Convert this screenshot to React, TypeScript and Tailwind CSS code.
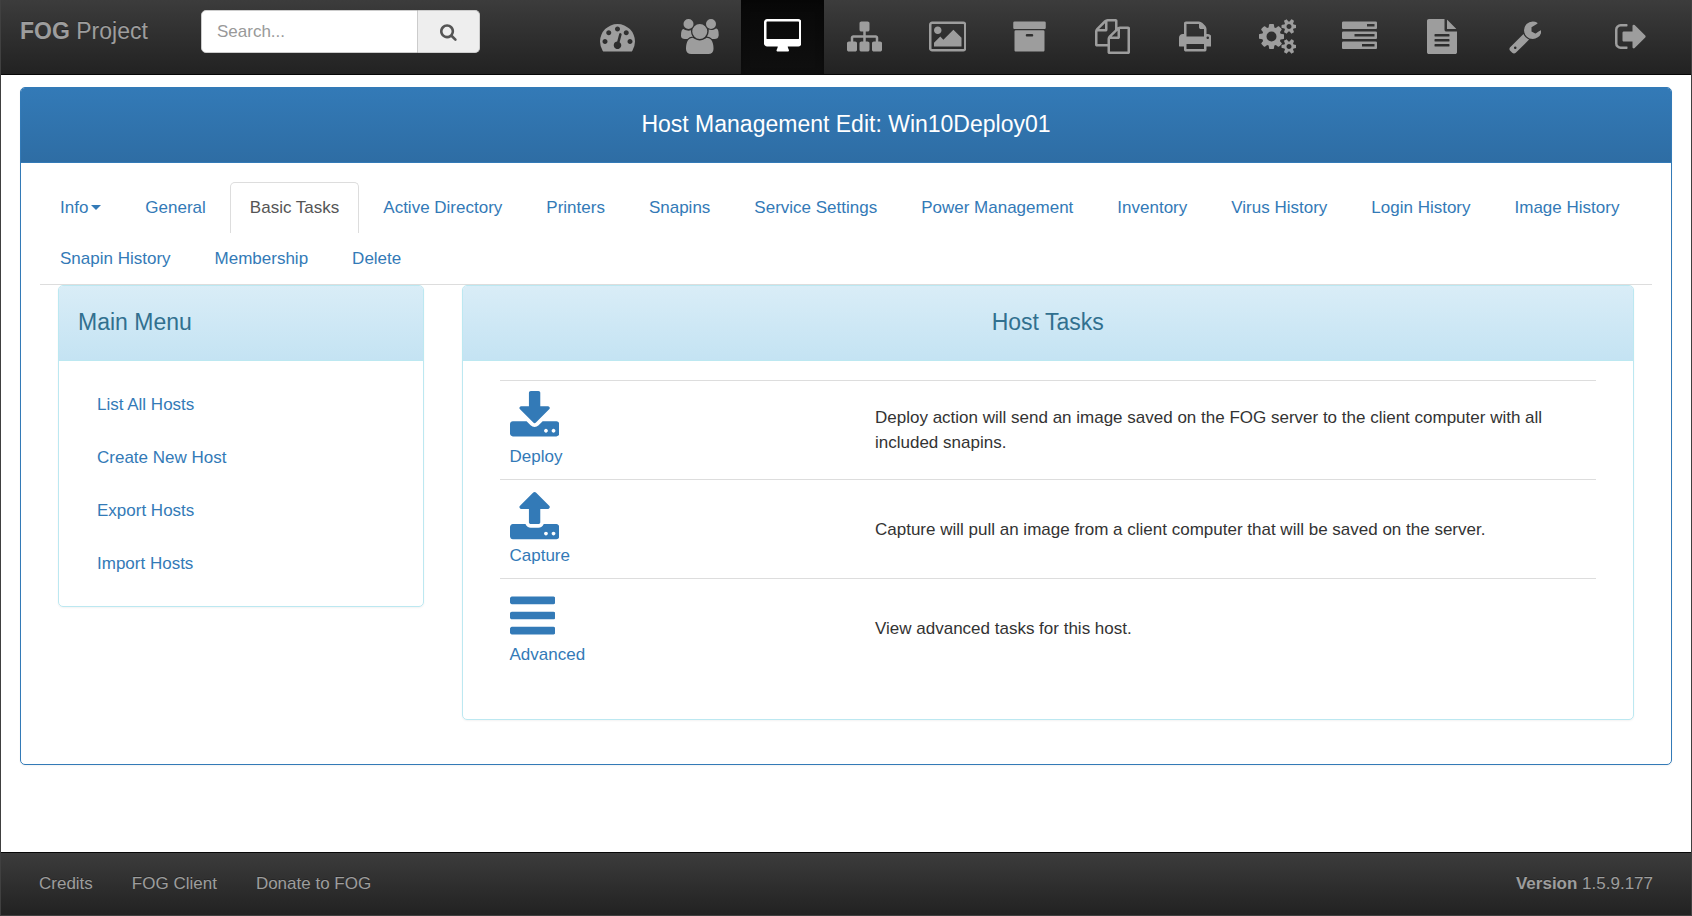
type Glyph = { width: number; path: string };

const bar = (y: number, w: number, h: number) =>
  `M${w} ${y + h - 64}v-${h - 128}q0 -26 -19 -45t-45 -19h-${w - 128}q-26 0 -45 19t-19 45v${h - 128}q0 26 19 45t45 19h${w - 128}q26 0 45 -19t19 -45z`;

const dot = (x: number, y: number) =>
  `M${x} ${y}q0 26 -19 45t-45 19t-45 -19t-19 -45t19 -45t45 -19t45 19t19 45z`;

const gauge = (x: number, y: number) =>
  `M${x} ${y}q0 53 -37.5 90.5t-90.5 37.5t-90.5 -37.5t-37.5 -90.5t37.5 -90.5t90.5 -37.5t90.5 37.5t37.5 90.5z`;

const smallCog = (y: number) =>
  `M1920 ${y}v-140q0 -16 -149 -31q-12 -27 -30 -52q51 -113 51 -138q0 -4 -4 -7q-122 -71 -124 -71q-8 0 -46 47t-52 68q-20 -2 -30 -2t-30 2q-14 -21 -52 -68t-46 -47q-2 0 -124 71q-4 3 -4 7q0 25 51 138q-18 25 -30 52q-149 15 -149 31v140q0 16 149 31q13 29 30 52q-51 113 -51 138q0 4 4 7q4 2 35 20t59 34t30 16q8 0 46 -46.5t52 -67.5q20 2 30 2t30 -2q51 71 92 112l6 2q4 0 124 -70q4 -3 4 -7q0 -25 -51 -138q17 -23 30 -52q149 -15 149 -31z`;

const textLine = (y: number) =>
  `M1152 ${y}v64q0 14 -9 23t-23 9h-704q-14 0 -23 -9t-9 -23v-64q0 -14 9 -23t23 -9h704q14 0 23 9t9 23z`;

// Paths use font coordinates: y grows upwards, baseline at 0, ascent 1536, descent -256.
const glyphs = {
  dashboard: {
    width: 1792,
    path:
      gauge(384, 384) +
      gauge(576, 832) +
      "M1004 351l101 382q6 26 -7.5 48.5t-38.5 29.5t-48 -6.5t-30 -39.5l-101 -382q-60 -5 -107 -43.5t-63 -98.5q-20 -77 20 -146t117 -89t146 20t89 117q16 60 -6 117t-72 91z" +
      gauge(1664, 384) +
      gauge(1024, 1024) +
      gauge(1472, 832) +
      "M1792 384q0 -261 -141 -483q-19 -29 -54 -29h-1402q-35 0 -54 29q-141 221 -141 483q0 182 71 348t191 286t286 191t348 71t348 -71t286 -191t191 -286t71 -348z",
  },
  users: {
    width: 1920,
    path: "M593 640q-162 -5 -265 -128h-134q-82 0 -138 40.5t-56 118.5q0 353 124 353q6 0 43.5 -21t97.5 -42.5t119 -21.5q67 0 133 23q-5 -37 -5 -66q0 -159 93 -287zM1664 3q0 -120 -73 -189.5t-194 -69.5h-874q-121 0 -194 69.5t-73 189.5q0 53 3.5 103.5t14 109t26.5 108.5t43 97.5t62 81t85.5 53.5t111.5 20q10 0 43 -21.5t73 -48t107 -48t135 -21.5t135 21.5t107 48t73 48t43 21.5q61 0 111.5 -20t85.5 -53.5t62 -81t43 -97.5t26.5 -108.5t14 -109t3.5 -103.5zM640 1280q0 -106 -75 -181t-181 -75t-181 75t-75 181t75 181t181 75t181 -75t75 -181zM1344 896q0 -159 -112.5 -271.5t-271.5 -112.5t-271.5 112.5t-112.5 271.5t112.5 271.5t271.5 112.5t271.5 -112.5t112.5 -271.5zM1920 671q0 -78 -56 -118.5t-138 -40.5h-134q-103 123 -265 128q93 128 93 287q0 29 -5 66q66 -23 133 -23q59 0 119 21.5t97.5 42.5t43.5 21q124 0 124 -353zM1792 1280q0 -106 -75 -181t-181 -75t-181 75t-75 181t75 181t181 75t181 -75t75 -181z",
  },
  desktop: {
    width: 1920,
    path: "M1792 544v832q0 13 -9.5 22.5t-22.5 9.5h-1600q-13 0 -22.5 -9.5t-9.5 -22.5v-832q0 -13 9.5 -22.5t22.5 -9.5h1600q13 0 22.5 9.5t9.5 22.5zM1920 1376v-1088q0 -66 -47 -113t-113 -47h-544q0 -37 16 -77.5t32 -71t16 -43.5q0 -26 -19 -45t-45 -19h-512q-26 0 -45 19t-19 45q0 14 16 44t32 70t16 78h-544q-66 0 -113 47t-47 113v1088q0 66 47 113t113 47h1600q66 0 113 -47t47 -113z",
  },
  sitemap: {
    width: 1792,
    path: "M1792 288v-320q0 -40 -28 -68t-68 -28h-320q-40 0 -68 28t-28 68v320q0 40 28 68t68 28h96v192h-512v-192h96q40 0 68 -28t28 -68v-320q0 -40 -28 -68t-68 -28h-320q-40 0 -68 28t-28 68v320q0 40 28 68t68 28h96v192h-512v-192h96q40 0 68 -28t28 -68v-320q0 -40 -28 -68t-68 -28h-320q-40 0 -68 28t-28 68v320q0 40 28 68t68 28h96v192q0 52 38 90t90 38h512v192h-96q-40 0 -68 28t-28 68v320q0 40 28 68t68 28h320q40 0 68 -28t28 -68v-320q0 -40 -28 -68t-68 -28h-96v-192h512q52 0 90 -38t38 -90v-192h96q40 0 68 -28t28 -68z",
  },
  picture: {
    width: 1920,
    path: "M640 960q0 -80 -56 -136t-136 -56t-136 56t-56 136t56 136t136 56t136 -56t56 -136zM1664 576v-448h-1408v192l320 320l160 -160l512 512zM1760 1280h-1600q-13 0 -22.5 -9.5t-9.5 -22.5v-1216q0 -13 9.5 -22.5t22.5 -9.5h1600q13 0 22.5 9.5t9.5 22.5v1216q0 13 -9.5 22.5t-22.5 9.5zM1920 1248v-1216q0 -66 -47 -113t-113 -47h-1600q-66 0 -113 47t-47 113v1216q0 66 47 113t113 47h1600q66 0 113 -47t47 -113z",
  },
  archive: {
    width: 1792,
    path: "M1088 704q0 26 -19 45t-45 19h-256q-26 0 -45 -19t-19 -45t19 -45t45 -19h256q26 0 45 19t19 45zM1664 896v-960q0 -26 -19 -45t-45 -19h-1408q-26 0 -45 19t-19 45v960q0 26 19 45t45 19h1408q26 0 45 -19t19 -45zM1728 1344v-256q0 -26 -19 -45t-45 -19h-1536q-26 0 -45 19t-19 45v256q0 26 19 45t45 19h1536q26 0 45 -19t19 -45z",
  },
  files: {
    width: 1792,
    path: "M1696 1152q40 0 68 -28t28 -68v-1216q0 -40 -28 -68t-68 -28h-960q-40 0 -68 28t-28 68v288h-544q-40 0 -68 28t-28 68v672q0 40 20 88t48 76l408 408q28 28 76 48t88 20h416q40 0 68 -28t28 -68v-328q68 40 128 40h416zM1152 939l-299 -299h299v299zM512 1323l-299 -299h299v299zM708 676l316 316v416h-384v-416q0 -40 -28 -68t-68 -28h-416v-640h512v256q0 40 20 88t48 76zM1664 -128v1152h-384v-416q0 -40 -28 -68t-68 -28h-416v-640h896z",
  },
  print: {
    width: 1664,
    path: "M384 0h896v256h-896v-256zM384 640h896v384h-160q-40 0 -68 28t-28 68v160h-640v-640zM1536 576q0 26 -19 45t-45 19t-45 -19t-19 -45t19 -45t45 -19t45 19t19 45zM1664 576v-416q0 -13 -9.5 -22.5t-22.5 -9.5h-224v-160q0 -40 -28 -68t-68 -28h-960q-40 0 -68 28t-28 68v160h-224q-13 0 -22.5 9.5t-9.5 22.5v416q0 79 56.5 135.5t135.5 56.5h64v544q0 40 28 68t68 28h672q40 0 88 -20t76 -48l152 -152q28 -28 48 -76t20 -88v-256h64q79 0 135.5 -56.5t56.5 -135.5z",
  },
  cogs: {
    width: 1920,
    path:
      "M896 640q0 106 -75 181t-181 75t-181 -75t-75 -181t75 -181t181 -75t181 75t75 181zM1664 128q0 52 -38 90t-90 38t-90 -38t-38 -90q0 -53 37.5 -90.5t90.5 -37.5t90.5 37.5t37.5 90.5zM1664 1152q0 52 -38 90t-90 38t-90 -38t-38 -90q0 -53 37.5 -90.5t90.5 -37.5t90.5 37.5t37.5 90.5zM1280 731v-185q0 -10 -7 -19.5t-16 -10.5l-155 -24q-11 -35 -32 -76q34 -48 90 -115q7 -11 7 -20q0 -12 -7 -19q-23 -30 -82.5 -89.5t-78.5 -59.5q-11 0 -21 7l-115 90q-37 -19 -77 -31q-11 -108 -23 -155q-7 -24 -30 -24h-186q-11 0 -20 7.5t-10 17.5l-23 153q-34 10 -75 31l-118 -89q-7 -7 -20 -7q-11 0 -21 8q-144 133 -144 160q0 9 7 19q10 14 41 53t47 61q-23 44 -35 82l-152 24q-10 1 -17 9.5t-7 19.5v185q0 10 7 19.5t16 10.5l155 24q11 35 32 76q-34 48 -90 115q-7 11 -7 20q0 12 7 20q22 30 82 89t79 59q11 0 21 -7l115 -90q34 18 77 32q11 108 23 154q7 24 30 24h186q11 0 20 -7.5t10 -17.5l23 -153q34 -10 75 -31l118 89q8 7 20 7q11 0 21 -8q144 -133 144 -160q0 -8 -7 -19q-12 -16 -42 -54t-45 -60q23 -48 34 -82l152 -23q10 -2 17 -10.5t7 -19.5z" +
      smallCog(198) +
      smallCog(1222),
  },
  tasks: {
    width: 1792,
    path:
      "M1024 128h640v128h-640v-128zM640 640h1024v128h-1024v-128zM1280 1152h384v128h-384v-128z" +
      bar(0, 1792, 384) +
      bar(512, 1792, 384) +
      bar(1024, 1792, 384),
  },
  report: {
    width: 1536,
    path:
      "M1468 1060q14 -14 28 -36h-472v472q22 -14 36 -28zM992 896h544v-1056q0 -40 -28 -68t-68 -28h-1344q-40 0 -68 28t-28 68v1600q0 40 28 68t68 28h800v-544q0 -40 28 -68t68 -28z" +
      textLine(160) +
      textLine(416) +
      textLine(672),
  },
  wrench: {
    width: 1664,
    path: "M384 64q0 26 -19 45t-45 19t-45 -19t-19 -45t19 -45t45 -19t45 19t19 45zM1028 484l-682 -682q-37 -37 -90 -37q-52 0 -91 37l-106 108q-38 36 -38 90q0 53 38 91l681 681q39 -98 114.5 -173.5t173.5 -114.5zM1662 919q0 -39 -23 -106q-47 -134 -164.5 -217.5t-258.5 -83.5q-185 0 -316.5 131.5t-131.5 316.5t131.5 316.5t316.5 131.5q58 0 121.5 -16.5t107.5 -46.5q16 -11 16 -28t-16 -28l-293 -169v-224l193 -107q5 3 79 48.5t135.5 81t70.5 35.5q15 0 23.5 -10t8.5 -25z",
  },
  signOut: {
    width: 1664,
    path: "M640 96q0 -4 1 -20t0.5 -26.5t-3 -23.5t-10 -19.5t-20.5 -6.5h-320q-119 0 -203.5 84.5t-84.5 203.5v704q0 119 84.5 203.5t203.5 84.5h320q13 0 22.5 -9.5t9.5 -22.5q0 -4 1 -20t0.5 -26.5t-3 -23.5t-10 -19.5t-20.5 -6.5h-320q-66 0 -113 -47t-47 -113v-704q0 -66 47 -113t113 -47h288h11h13t11.5 -1t11.5 -3t8 -5.5t7 -9t2 -13.5zM1568 640q0 -26 -19 -45l-544 -544q-19 -19 -45 -19t-45 19t-19 45v288h-448q-26 0 -45 19t-19 45v384q0 26 19 45t45 19h448v288q0 26 19 45t45 19t45 -19l544 -544q19 -19 19 -45z",
  },
  search: {
    width: 1664,
    path: "M1152 704q0 185 -131.5 316.5t-316.5 131.5t-316.5 -131.5t-131.5 -316.5t131.5 -316.5t316.5 -131.5t316.5 131.5t131.5 316.5zM1664 -128q0 -52 -38 -90t-90 -38q-54 0 -90 38l-343 342q-179 -124 -399 -124q-143 0 -273.5 55.5t-225 150t-150 225t-55.5 273.5t55.5 273.5t150 225t225 150t273.5 55.5t273.5 -55.5t225 -150t150 -225t55.5 -273.5q0 -220 -124 -399l343 -343q37 -37 37 -90z",
  },
  download: {
    width: 1664,
    path:
      dot(1280, 192) +
      dot(1536, 192) +
      "M1664 416v-320q0 -40 -28 -68t-68 -28h-1472q-40 0 -68 28t-28 68v320q0 40 28 68t68 28h465l135 -136q58 -56 136 -56t136 56l136 136h464q40 0 68 -28t28 -68zM1339 985q17 -41 -14 -70l-448 -448q-18 -19 -45 -19t-45 19l-448 448q-31 29 -14 70q17 39 59 39h256v448q0 26 19 45t45 19h256q26 0 45 -19t19 -45v-448h256q42 0 59 -39z",
  },
  upload: {
    width: 1664,
    path:
      dot(1280, 64) +
      dot(1536, 64) +
      "M1664 288v-320q0 -40 -28 -68t-68 -28h-1472q-40 0 -68 28t-28 68v320q0 40 28 68t68 28h427q21 -56 70.5 -92t110.5 -36h256q61 0 110.5 36t70.5 92h427q40 0 68 -28t28 -68zM1339 936q-17 -40 -59 -40h-256v-448q0 -26 -19 -45t-45 -19h-256q-26 0 -45 19t-19 45v448h-256q-42 0 -59 40q-17 39 14 69l448 448q18 19 45 19t45 -19l448 -448q31 -30 14 -69z",
  },
  bars: {
    width: 1536,
    path: bar(0, 1536, 256) + bar(512, 1536, 256) + bar(1024, 1536, 256),
  },
} satisfies Record<string, Glyph>;

type IconName = keyof typeof glyphs;

function Icon({ name, className }: { name: IconName; className: string }) {
  const { width, path } = glyphs[name];
  return (
    <svg viewBox={`0 0 ${width} 1792`} className={`block w-auto ${className}`} aria-hidden="true">
      <path fill="currentColor" fillRule="evenodd" transform="translate(0 1536) scale(1 -1)" d={path} />
    </svg>
  );
}

const navItems: { icon: IconName; label: string; active?: boolean }[] = [
  { icon: "dashboard", label: "Dashboard" },
  { icon: "users", label: "Users" },
  { icon: "desktop", label: "Hosts", active: true },
  { icon: "sitemap", label: "Groups" },
  { icon: "picture", label: "Images" },
  { icon: "archive", label: "Storage" },
  { icon: "files", label: "Snapins" },
  { icon: "print", label: "Printers" },
  { icon: "cogs", label: "Services" },
  { icon: "tasks", label: "Tasks" },
  { icon: "report", label: "Reports" },
  { icon: "wrench", label: "Configuration" },
];

const tabs = [
  "Info",
  "General",
  "Basic Tasks",
  "Active Directory",
  "Printers",
  "Snapins",
  "Service Settings",
  "Power Management",
  "Inventory",
  "Virus History",
  "Login History",
  "Image History",
  "Snapin History",
  "Membership",
  "Delete",
];

const menu = ["List All Hosts", "Create New Host", "Export Hosts", "Import Hosts"];

const tasks: { icon: IconName; name: string; text: string }[] = [
  {
    icon: "download",
    name: "Deploy",
    text: "Deploy action will send an image saved on the FOG server to the client computer with all included snapins.",
  },
  {
    icon: "upload",
    name: "Capture",
    text: "Capture will pull an image from a client computer that will be saved on the server.",
  },
  { icon: "bars", name: "Advanced", text: "View advanced tasks for this host." },
];

function Header() {
  return (
    <header className="flex border-b border-[#080808] bg-linear-to-b from-[#3c3c3c] to-[#222222] text-[#9d9d9d]">
      <a href="#" className="w-[181px] pt-4 pl-[19px] text-[23px] leading-[30px] [text-shadow:0_-1px_0_rgba(0,0,0,0.25)]">
        <b>FOG</b> Project
      </a>
      <form className="mt-[10px] ml-[19px] flex h-[43px] w-[279px] self-start">
        <input
          type="search"
          aria-label="Search"
          placeholder="Search..."
          className="min-w-0 flex-1 rounded-l-[5px] border border-[#cccccc] bg-white px-[15px] text-[17px] text-[#555555] placeholder:text-[#999999]"
        />
        <button
          type="button"
          aria-label="Search"
          className="flex w-[62px] items-center justify-center rounded-r-[5px] border border-l-0 border-[#cccccc] bg-[#eeeeee] text-[#555555]"
        >
          <Icon name="search" className="h-[18px]" />
        </button>
      </form>
      <nav className="ml-auto flex pr-[18px]">
        <ul className="flex w-[990px]">
          {navItems.map((item) => (
            <li key={item.label} className="flex-1">
              <a
                href="#"
                aria-label={item.label}
                className={
                  item.active
                    ? "flex h-[74px] justify-center bg-linear-to-b from-[#080808] to-[#0f0f0f] pt-[19px] text-white shadow-[inset_0_3px_9px_rgba(0,0,0,0.25)]"
                    : "flex h-[74px] justify-center pt-[19px]"
                }
              >
                <Icon name={item.icon} className="h-[35px]" />
              </a>
            </li>
          ))}
        </ul>
        <a href="#" aria-label="Logout" className="ml-6 flex h-[74px] w-[83px] justify-center pt-[19px]">
          <Icon name="signOut" className="h-[35px]" />
        </a>
      </nav>
    </header>
  );
}

function Tabs() {
  return (
    <ul className="flex flex-wrap border-b border-[#dddddd]">
      {tabs.map((tab) => (
        <li key={tab} className="mr-1">
          <a
            href="#"
            className={
              tab === "Basic Tasks"
                ? "flex items-center rounded-t-[5px] border border-b-0 border-[#dddddd] px-[19px] pt-3 pb-[13px] leading-[25px] text-[#555555]"
                : "flex items-center border border-b-0 border-transparent px-[19px] pt-3 pb-[13px] leading-[25px]"
            }
          >
            {tab}
            {tab === "Info" && (
              <span className="ml-[3px] border-x-[5px] border-t-[5px] border-x-transparent border-t-[#337ab7]" />
            )}
          </a>
        </li>
      ))}
    </ul>
  );
}

export default function App() {
  return (
    <div className="flex min-h-screen flex-col border-x border-b border-[#404040] bg-white font-['Liberation_Sans',Arial,sans-serif] text-[17px] leading-[25px] text-[#333333]">
      <Header />
      <main className="px-[19px] pt-3 pb-6">
        <section className="rounded-[5px] border border-[#337ab7] shadow-[0_1px_2px_rgba(0,0,0,0.05)]">
          <h1 className="rounded-t-[4px] border-b border-[#337ab7] bg-linear-to-b from-[#337ab7] to-[#2e6da4] pt-[23px] pb-[25px] text-center text-[23px] leading-[26px] text-white">
            Host Management Edit: Win10Deploy01
          </h1>
          <div className="px-[19px] pt-[19px] pb-11 text-[#337ab7]">
            <Tabs />
            <div className="grid grid-cols-12 items-start gap-[38px] px-[18px]">
              <section className="col-span-3 rounded-[5px] border border-[#bce8f1] shadow-[0_1px_2px_rgba(0,0,0,0.05)]">
                <h2 className="rounded-t-[4px] border-b border-[#bce8f1] bg-linear-to-b from-[#d9edf7] to-[#c4e3f3] px-[19px] pt-[23px] pb-[25px] text-[23px] leading-[26px] text-[#31708f]">
                  Main Menu
                </h2>
                <ul className="flex flex-col gap-[3px] px-[19px] pt-[19px] pb-[17px]">
                  {menu.map((item) => (
                    <li key={item}>
                      <a href="#" className="block px-[19px] pt-3 pb-[13px]">
                        {item}
                      </a>
                    </li>
                  ))}
                </ul>
              </section>
              <section className="col-span-9 rounded-[5px] border border-[#bce8f1] shadow-[0_1px_2px_rgba(0,0,0,0.05)]">
                <h2 className="rounded-t-[4px] border-b border-[#bce8f1] bg-linear-to-b from-[#d9edf7] to-[#c4e3f3] pt-[23px] pb-[25px] text-center text-[23px] leading-[26px] text-[#31708f]">
                  Host Tasks
                </h2>
                <div className="px-[37px] pt-[19px] pb-[42px]">
                  <table className="w-full table-fixed">
                    <tbody>
                      {tasks.map((task) => (
                        <tr key={task.name} className="border-t border-[#dddddd]">
                          <td className="w-1/3 p-[10px]">
                            <a href="#" className="inline-block align-top">
                              <Icon name={task.icon} className="h-[53px]" />
                              {task.name}
                            </a>
                          </td>
                          <td className="px-[10px] align-middle text-[#333333]">{task.text}</td>
                        </tr>
                      ))}
                    </tbody>
                  </table>
                </div>
              </section>
            </div>
          </div>
        </section>
      </main>
      <footer className="mt-auto flex justify-between border-t border-[#080808] bg-linear-to-b from-[#3c3c3c] to-[#222222] px-[38px] pt-[18px] pb-[19px] text-[#9d9d9d] [text-shadow:0_-1px_0_rgba(0,0,0,0.25)]">
        <nav className="flex gap-[39px]">
          <a href="#">Credits</a>
          <a href="#">FOG Client</a>
          <a href="#">Donate to FOG</a>
        </nav>
        <p>
          <b>Version</b> 1.5.9.177
        </p>
      </footer>
    </div>
  );
}
